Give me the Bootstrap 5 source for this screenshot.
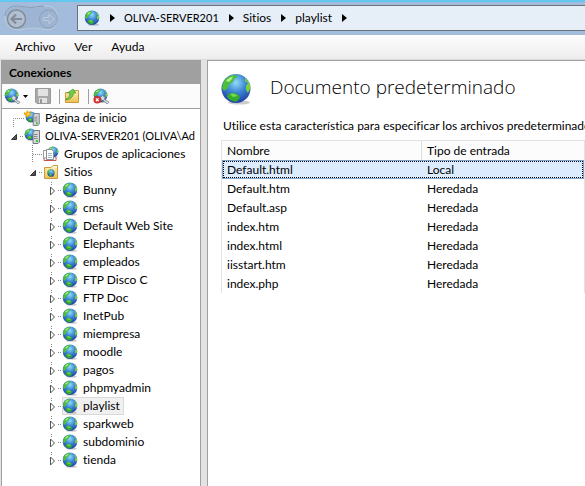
<!DOCTYPE html>
<html lang="es">
<head>
<meta charset="utf-8">
<meta name="viewport" content="width=device-width, initial-scale=1">
<title>Administrador de IIS</title>
<link rel="stylesheet" href="https://cdn.jsdelivr.net/npm/bootstrap@5.3.0/dist/css/bootstrap.min.css">
<style>
body{font-family:Lato,"Open Sans",sans-serif;font-size:12px;line-height:18px;font-variant-ligatures:none;color:#000;background:#e3e3e3}
a{color:inherit;text-decoration:none}
svg{display:block;flex:none}
button{border:0;padding:0;background:none;color:inherit}
.host{font-size:11px}
.topbar{background:#a3bcdb;border-top:2px solid #62c8ef;height:35px}
.address{height:26px;margin:3px 0 4px 12px;padding-left:6px;background:#e6eef7;border:1px solid #69727e;border-right:0}
.address li{display:flex;align-items:center}
.address li svg{margin:0 9px 0 10px}
.menubar{height:25px;padding-left:15px;gap:19px;background:linear-gradient(#fdfdfd,#ededed);border-bottom:1px solid #dcdcdc}
.side{width:200px;margin-left:1px;background:#fff;border:solid #a0a0a0;border-width:0 1px}
.side h2{height:24px;line-height:26px;padding-left:7px;font-size:12px;font-weight:700;background:#a0a0a0}
.tools{height:25px;padding-left:2px;background:#fbfbfb;border-bottom:1px solid #a0a0a0}
.tools i{width:1px;height:15px;margin:0 4px 0 8px;background:#a0a0a0}
.drop{display:flex;align-items:center;gap:2px;margin-right:7px}
.tree ul,.tree{list-style:none;margin:0;padding:0}
.tree{padding-left:3px}
.tree ul{padding-left:19px}
.node{display:flex;height:18px;white-space:nowrap}
.node a{display:flex;align-items:center;height:18px;padding-right:4px}
.node a span{padding-left:5px}
.node a.current{background:#f0f0f0;outline:1px solid #d9d9d9;outline-offset:-1px}
.main{margin-left:6px;background:#fff;border:solid #a0a0a0;border-width:1px 0 0 1px;overflow:hidden}
.main h1{font-family:"Open Sans",sans-serif;font-size:19px;font-weight:300;line-height:28px}
.heading{padding:12px 0 0 12px;gap:18px}
.intro{padding:12px 0 0 15px;line-height:18px}
.grid{margin:5px 0 0 13px;border:solid #e3e3e3;border-width:1px 1px 0 1px}
.grid table{width:100%;table-layout:fixed;border-collapse:separate;border-spacing:0}
.grid th,.grid td{height:19px;line-height:17px;padding:1px 5px;font-weight:400;white-space:nowrap}
.grid th{background:#fcfcfc}
.grid th+th{border-left:1px solid #dedede}
.grid td+td{padding-left:6px}
.grid th:first-child{width:199px}
.grid .picked{background:#dcebfd;outline:1px dotted #000;outline-offset:-2px;box-shadow:inset 0 0 0 1px #7da2ce}
</style>
<script src="https://cdn.jsdelivr.net/npm/bootstrap@5.3.0/dist/js/bootstrap.bundle.min.js"></script>
</head>
<body class="d-flex flex-column min-vh-100 overflow-hidden">
<svg width="0" height="0" class="position-absolute" aria-hidden="true">
<defs>
<radialGradient id="sea" cx=".5" cy=".3" r=".75"><stop offset="0" stop-color="#8fdcf8"/><stop offset=".45" stop-color="#3d86d6"/><stop offset="1" stop-color="#1b35a0"/></radialGradient>
<linearGradient id="paper" x2="0" y2="1"><stop stop-color="#fff4b8"/><stop offset="1" stop-color="#edc04e"/></linearGradient>
<symbol id="globe" viewBox="0 0 32 32"><ellipse cx="19" cy="29.500" rx="11" ry="2" fill="#000" opacity=".2"/><circle cx="16" cy="15.500" r="14.500" fill="url(#sea)"/><path d="M3 10Q6 3 14 2L18 3 14 6 13 9 9 11 8 15 4 18 2 15Z" fill="#4cbf38"/><path d="M6 8Q9 4 13 3.500L12 6 9 9Z" fill="#b6ee8a"/><path d="M25 5Q30 9 30.500 15L28 20 26 17 26 13 28 10 25 8Z" fill="#7bd238"/><path d="M8 21 13 19.500 19 22 20 25 16 29 10 27 7 24Z" fill="#35ac2b"/><path d="M10 21 14 20.500 18 23 13 24Z" fill="#79d952"/></symbol>
<symbol id="tower" viewBox="0 0 8 14"><path d="M1 2 3 .5H7.500V12L6 13.500H1Z" fill="#d4d7da" stroke="#72787e"/><path d="M2 4.500H5.500M2 6.500H5.500M2 8.500H5.500" stroke="#888"/><path d="M4 11h2" stroke="#3c3" stroke-width="2"/></symbol>
<symbol id="home" viewBox="0 0 16 16"><use href="#globe" x="1" y="1" width="12" height="12"/><path d="M0 2 2 3 3 0 5 2 7 1 6 4 8 5 5 6 3 8 2 5 0 5Z" fill="#f6a81c"/><path d="M3 3h2v2H3Z" fill="#ffe06a"/><use href="#tower" x="8" y="3" width="8" height="13"/></symbol>
<symbol id="server" viewBox="0 0 16 16"><use href="#globe" x="0" y="0" width="13" height="13"/><use href="#tower" x="8" y="2" width="8" height="14"/></symbol>
<symbol id="pools" viewBox="0 0 16 16"><use href="#globe" x="4" y="0" width="12" height="12"/><path d="M.5 4.500H6V12H.5Z" fill="#fff" stroke="#999"/><path d="M3.500 3.500H8.500L10.500 5.500V13.500H3.500Z" fill="#fff" stroke="#8a8f96"/><path d="M5 7.500H9M5 9.500H9M5 11.500H9" stroke="#a0b4cc"/><path d="M1 12v2.500h12V11" fill="none" stroke="#c8524b"/></symbol>
<symbol id="folder" viewBox="0 0 16 16"><path d="M1.500 3.500H8L10 1.500H14.500V14.500H1.500Z" fill="url(#paper)" stroke="#c99b3c"/><path d="M10 3h4" stroke="#fff"/><use href="#globe" x="4" y="5" width="8" height="8"/></symbol>
<symbol id="up" viewBox="0 0 16 16"><path d="M1.500 4.500H8L9.500 2.500H14.500V14.500H1.500Z" fill="url(#paper)" stroke="#c99b3c"/><path d="M2 11Q6 10 6 5H3.500L9 1 12 5H9.500Q9 11 2 12Z" fill="#6fce4c" stroke="#368c22" stroke-width=".6"/></symbol>
<symbol id="connect" viewBox="0 0 18 18"><use href="#globe" width="16" height="16"/><path d="M8 10 10 8 13 10 12 12 17 15 15 17 11 13 9 13Z" fill="#d5dce0" stroke="#74818c" stroke-width=".8"/></symbol>
<symbol id="crumb" viewBox="0 0 5 8"><path d="M0 0 5 4 0 8Z"/></symbol>
<symbol id="open" viewBox="0 0 19 18"><path d="M11.500 7.500V12.500H6.500Z" fill="#555" stroke="#333"/><path d="M15 9.500h4" stroke="#888" stroke-dasharray="1 1"/></symbol>
<symbol id="shut" viewBox="0 0 19 18"><path d="M8.500 1V4M15 9.500h4" stroke="#888" stroke-dasharray="1 1"/><path d="M7.500 6V14L11.500 10Z" fill="#fff" stroke="#555"/></symbol>
</defs></svg>

<header>
<div class="topbar d-flex">
<svg width="65" height="33" viewBox="0 -1 65 33"><path d="M5 14Q6 2 20 3Q33 6 45 3Q57 2 58 15Q57 27 46 27Q33 23 20 27Q6 27 5 14Z" fill="#9db5d2" stroke="#bccde0"/><path d="M5 13Q6 2 19 3Q31 6 44 3" fill="none" stroke="#8299b6"/><g fill="#b0c0d2" stroke="#848c96" stroke-width="1.500"><circle cx="16.500" cy="16" r="9"/><path d="M22 16H12M16 11.500 11.500 16 16 20.500" fill="none" stroke-width="2.200"/></g><g fill="none" stroke="#91a0b3"><circle cx="48.500" cy="16" r="9"/><path d="M43.500 14.500H49V11L54 16 49 21V17.500H43.500Z" stroke="#bccbdc"/></g></svg>
<nav class="address flex-grow-1 d-flex align-items-center" aria-label="Ruta">
<svg width="16" height="16"><use href="#globe"/></svg>
<ol class="list-unstyled d-flex mb-0">
<li><svg width="5" height="8"><use href="#crumb"/></svg><a href="#" class="host">OLIVA-SERVER201</a></li>
<li><svg width="5" height="8"><use href="#crumb"/></svg><a href="#">Sitios</a></li>
<li><svg width="5" height="8"><use href="#crumb"/></svg><a href="#">playlist</a></li>
<li><svg width="5" height="8"><use href="#crumb"/></svg></li>
</ol></nav>
</div>
<nav class="menubar d-flex align-items-center"><button>Archivo</button><button>Ver</button><button>Ayuda</button></nav>
</header>

<div class="d-flex flex-grow-1">
<aside class="side flex-shrink-0 overflow-hidden">
<h2 class="m-0">Conexiones</h2>
<div class="tools d-flex align-items-center">
<button aria-label="Conectar" class="drop"><svg width="17" height="17"><use href="#connect"/></svg><svg width="5" height="3"><path d="M0 0H5L2.500 3Z"/></svg></button>
<button aria-label="Guardar"><svg width="16" height="16" viewBox="0 0 16 16"><path d="M.5.5H15.500V15.500H2L.5 14Z" fill="#a9a9a9" stroke="#999"/><path d="M3 1H13V8H3ZM4 10H12V15H4Z" fill="#e2e2e2"/><path d="M5 11h2v4H5Z" fill="#999"/></svg></button>
<i></i>
<button aria-label="Subir"><svg width="16" height="16"><use href="#up"/></svg></button>
<i></i>
<button aria-label="Desconectar"><svg width="17" height="17" viewBox="0 0 18 18"><use href="#connect" width="18" height="18"/><circle cx="4.500" cy="12.500" r="4" fill="#d32f2a"/><path d="M3 11 6 14M6 11 3 14" stroke="#fff" stroke-width="1.300"/></svg></button>
</div>
<ul class="tree">
<li><div class="node"><svg width="19" height="18"><path d="M8.500 18V9.500H19" fill="none" stroke="#888" stroke-dasharray="1 1"/></svg><a href="#"><svg width="16" height="16"><use href="#home"/></svg><span>Página de inicio</span></a></div></li>
<li><div class="node"><button aria-label="Contraer"><svg width="19" height="18"><use href="#open"/></svg></button><a href="#"><svg width="16" height="16"><use href="#server"/></svg><span class="host">OLIVA-SERVER201 (OLIVA\Ad</span></a></div>
<ul>
<li><div class="node"><svg width="19" height="18"><path d="M8.500 0V18M9 9.500H19" stroke="#888" stroke-dasharray="1 1"/></svg><a href="#"><svg width="16" height="16"><use href="#pools"/></svg><span>Grupos de aplicaciones</span></a></div></li>
<li><div class="node"><button aria-label="Contraer"><svg width="19" height="18"><use href="#open"/></svg></button><a href="#"><svg width="16" height="16"><use href="#folder"/></svg><span>Sitios</span></a></div>
<ul>
<li><div class="node"><button aria-label="Expandir"><svg width="19" height="18"><use href="#shut"/></svg></button><a href="#"><svg width="16" height="16"><use href="#globe"/></svg><span>Bunny</span></a></div></li>
<li><div class="node"><button aria-label="Expandir"><svg width="19" height="18"><use href="#shut"/></svg></button><a href="#"><svg width="16" height="16"><use href="#globe"/></svg><span>cms</span></a></div></li>
<li><div class="node"><button aria-label="Expandir"><svg width="19" height="18"><use href="#shut"/></svg></button><a href="#"><svg width="16" height="16"><use href="#globe"/></svg><span>Default Web Site</span></a></div></li>
<li><div class="node"><button aria-label="Expandir"><svg width="19" height="18"><use href="#shut"/></svg></button><a href="#"><svg width="16" height="16"><use href="#globe"/></svg><span>Elephants</span></a></div></li>
<li><div class="node"><button aria-label="Expandir"><svg width="19" height="18"><use href="#shut"/></svg></button><a href="#"><svg width="16" height="16"><use href="#globe"/></svg><span>empleados</span></a></div></li>
<li><div class="node"><button aria-label="Expandir"><svg width="19" height="18"><use href="#shut"/></svg></button><a href="#"><svg width="16" height="16"><use href="#globe"/></svg><span>FTP Disco C</span></a></div></li>
<li><div class="node"><button aria-label="Expandir"><svg width="19" height="18"><use href="#shut"/></svg></button><a href="#"><svg width="16" height="16"><use href="#globe"/></svg><span>FTP Doc</span></a></div></li>
<li><div class="node"><button aria-label="Expandir"><svg width="19" height="18"><use href="#shut"/></svg></button><a href="#"><svg width="16" height="16"><use href="#globe"/></svg><span>InetPub</span></a></div></li>
<li><div class="node"><button aria-label="Expandir"><svg width="19" height="18"><use href="#shut"/></svg></button><a href="#"><svg width="16" height="16"><use href="#globe"/></svg><span>miempresa</span></a></div></li>
<li><div class="node"><button aria-label="Expandir"><svg width="19" height="18"><use href="#shut"/></svg></button><a href="#"><svg width="16" height="16"><use href="#globe"/></svg><span>moodle</span></a></div></li>
<li><div class="node"><button aria-label="Expandir"><svg width="19" height="18"><use href="#shut"/></svg></button><a href="#"><svg width="16" height="16"><use href="#globe"/></svg><span>pagos</span></a></div></li>
<li><div class="node"><button aria-label="Expandir"><svg width="19" height="18"><use href="#shut"/></svg></button><a href="#"><svg width="16" height="16"><use href="#globe"/></svg><span>phpmyadmin</span></a></div></li>
<li><div class="node"><button aria-label="Expandir"><svg width="19" height="18"><use href="#shut"/></svg></button><a href="#" class="current"><svg width="16" height="16"><use href="#globe"/></svg><span>playlist</span></a></div></li>
<li><div class="node"><button aria-label="Expandir"><svg width="19" height="18"><use href="#shut"/></svg></button><a href="#"><svg width="16" height="16"><use href="#globe"/></svg><span>sparkweb</span></a></div></li>
<li><div class="node"><button aria-label="Expandir"><svg width="19" height="18"><use href="#shut"/></svg></button><a href="#"><svg width="16" height="16"><use href="#globe"/></svg><span>subdominio</span></a></div></li>
<li><div class="node"><button aria-label="Expandir"><svg width="19" height="18"><use href="#shut"/></svg></button><a href="#"><svg width="16" height="16"><use href="#globe"/></svg><span>tienda</span></a></div></li>
</ul></li>
</ul></li>
</ul>
</aside>

<main class="main flex-grow-1">
<div class="heading d-flex"><svg width="32" height="32"><use href="#globe"/></svg><h1 class="mb-0 text-nowrap">Documento predeterminado</h1></div>
<p class="intro mb-0 text-nowrap">Utilice esta característica para especificar los archivos predeterminado</p>
<div class="grid"><table>
<thead><tr><th scope="col">Nombre</th><th scope="col">Tipo de entrada</th></tr></thead>
<tbody>
<tr class="picked"><td>Default.html</td><td>Local</td></tr>
<tr><td>Default.htm</td><td>Heredada</td></tr>
<tr><td>Default.asp</td><td>Heredada</td></tr>
<tr><td>index.htm</td><td>Heredada</td></tr>
<tr><td>index.html</td><td>Heredada</td></tr>
<tr><td>iisstart.htm</td><td>Heredada</td></tr>
<tr><td>index.php</td><td>Heredada</td></tr>
</tbody></table></div>
</main>
</div>
</body>
</html>
